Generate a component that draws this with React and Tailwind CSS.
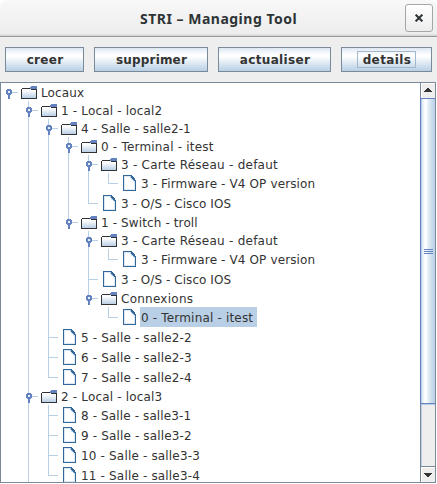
import React from "react";

const NODES = [
  [0, "Locaux", "folder", "tracking-[0.12px]"],
  [1, "1 - Local - local2", "folder", "tracking-[0.17px]"],
  [2, "4 - Salle - salle2-1", "folder", "tracking-[0.1px]"],
  [3, "0 - Terminal - itest", "folder", "tracking-[0.2px]"],
  [4, "3 - Carte Réseau - defaut", "folder", "tracking-[0.25px]"],
  [5, "3 - Firmware - V4 OP version", "leaf", "tracking-[0.13px]"],
  [4, "3 - O/S - Cisco IOS", "leaf", "tracking-[0.06px]"],
  [3, "1 - Switch - troll", "folder", "tracking-[0.12px]"],
  [4, "3 - Carte Réseau - defaut", "folder", "tracking-[0.25px]"],
  [5, "3 - Firmware - V4 OP version", "leaf", "tracking-[0.13px]"],
  [4, "3 - O/S - Cisco IOS", "leaf", "tracking-[0.06px]"],
  [4, "Connexions", "folder", "tracking-[0.25px]"],
  [5, "0 - Terminal - itest", "leaf", "tracking-[0.18px]", true],
  [2, "5 - Salle - salle2-2", "leaf", "tracking-[0.15px]"],
  [2, "6 - Salle - salle2-3", "leaf", "tracking-[0.15px]"],
  [2, "7 - Salle - salle2-4", "leaf", "tracking-[0.15px]"],
  [1, "2 - Local - local3", "folder", "tracking-[0.17px]"],
  [2, "8 - Salle - salle3-1", "leaf", "tracking-[0.12px]"],
  [2, "9 - Salle - salle3-2", "leaf", "tracking-[0.15px]"],
  [2, "10 - Salle - salle3-3", "leaf", "tracking-[0.17px]"],
  [2, "11 - Salle - salle3-4", "leaf", "tracking-[0.17px]"],
].map(([depth, label, kind, tracking, selected]) => ({ depth, label, kind, tracking, selected }));

// True when a later sibling exists at this level, so its guide line continues.
function continues(index, level) {
  for (let i = index + 1; i < NODES.length; i++) {
    if (NODES[i].depth < level) return level === 1;
    if (NODES[i].depth === level) return true;
  }
  return level === 1;
}

function Guides({ index }) {
  const { depth, kind } = NODES[index];
  const folder = kind === "folder";
  const h = folder ? 18 : 20;
  const mid = folder ? 9 : 10;
  const x = depth * 20 + 7;
  const lines = [];
  for (let level = 1; level <= depth; level++) {
    const on = continues(index, level);
    if (on || level === depth) {
      lines.push(
        <rect key={level} x={level * 20 + 7} y={0} width={1} height={on ? h : mid + 1} fill="#b8cfe5" />
      );
    }
  }
  const width = depth * 20 + (folder ? 20 : 22);
  return (
    <svg width={width} height={h} className="shrink-0" shapeRendering="crispEdges">
      {lines}
      <rect x={folder ? x + 4 : x} y={mid} width={folder ? 6 : 10} height={1} fill="#b8cfe5" />
      {folder && (
        <g fill="#6382bf">
          <rect x={x - 1} y={6} width={4} height={6} />
          <rect x={x - 2} y={7} width={6} height={4} />
          <rect x={x} y={12} width={2} height={4} />
          <rect x={x} y={8} width={2} height={2} fill="#e4ecf5" />
        </g>
      )}
    </svg>
  );
}

function FolderIcon() {
  return (
    <svg width="20" height="18" className="shrink-0" shapeRendering="crispEdges">
      <defs>
        <linearGradient id="folder" x1="0" y1="0" x2="0" y2="1">
          <stop offset="0" stopColor="#fff" />
          <stop offset="0.3" stopColor="#edf2f8" />
          <stop offset="1" stopColor="#b8cfe5" />
        </linearGradient>
      </defs>
      <rect x="0" y="6" width="16" height="10" fill="#333" />
      <rect x="1" y="5" width="9" height="1" fill="#333" />
      <rect x="1" y="6" width="9" height="2" fill="#fff" />
      <rect x="1" y="7" width="14" height="8" fill="url(#folder)" />
      <rect x="10" y="3" width="6" height="1" fill="#6382bf" />
      <rect x="9" y="4" width="7" height="2" fill="#6382bf" />
    </svg>
  );
}

function LeafIcon() {
  return (
    <svg width="18" height="20" className="shrink-0" shapeRendering="crispEdges">
      <g transform="translate(0 1)">
        <path d="M0 1h9v1h1v1h1v1h1v2h1v11H0z" fill="#336699" />
        <path d="M1 2h7v1h1v2h1v1h2v10H1z" fill="#dce8f3" />
        <path d="M2 3h6v3h2v2h1v7H2z" fill="#fff" />
        <path d="M7 2h1v1h1v1h1v1h1v2h-1v-1h-1v-1h-1v-1H7z" fill="#b8cfe5" />
        <path d="M8 3h1v1h1v1h1v1h1v1h-1v-1h-1v-1h-1v-1h-1z" fill="#336699" />
      </g>
    </svg>
  );
}

function Row({ index }) {
  const { label, kind, tracking, selected } = NODES[index];
  const folder = kind === "folder";
  return (
    <div className={`flex shrink-0 ${folder ? "h-[18px]" : "h-5"}`}>
      <Guides index={index} />
      {folder ? <FolderIcon /> : <LeafIcon />}
      <span
        className={`whitespace-pre -ml-px pl-px pt-0.5 ${tracking} ${folder ? "leading-[17px]" : "leading-[19px]"} ${
          selected ? "w-[117px] bg-[#b8cfe5]" : ""
        }`}
      >
        {label}
      </span>
    </div>
  );
}

const METAL =
  "border border-[#7a8a99] bg-[linear-gradient(180deg,#dde8f3_0%,#ffffff_30%,#ffffff_36%,#dfe9f3_65%,#b8cfe5_100%)]";

function MetalButton({ label, width, tracking, focused }) {
  return (
    <button className={`flex h-[25px] items-center justify-center ${METAL} ${width} ${tracking} text-[12px] font-bold`}>
      <span
        className={`flex h-[17px] items-center justify-center whitespace-nowrap border pl-px leading-[17px] ${
          focused ? "w-[59px] border-[#a3b8cc]" : "border-transparent"
        }`}
      >
        <span className="pt-0.5">{label}</span>
      </span>
    </button>
  );
}

function ArrowButton({ down }) {
  return (
    <div className="flex h-[15px] shrink-0 justify-center border-l border-t border-white bg-[#eeeeee]">
      <svg width="9" height="14" shapeRendering="crispEdges">
        <path
          d={down ? "M0 5h8v1h-1v1h-1v1h-1v1h-2v-1h-1v-1h-1v-1h-1z" : "M0 8h8v-1h-1v-1h-1v-1h-1v-1h-2v1h-1v1h-1v1h-1z"}
          fill="#333"
        />
      </svg>
    </div>
  );
}

function Scrollbar() {
  return (
    <div className="flex w-4 shrink-0 flex-col border-r border-[#7a8a99]">
      <div className="border-l border-[#7a8a99]">
        <ArrowButton />
      </div>
      <div className="flex h-[306px] shrink-0 flex-col items-center justify-center gap-px border-y border-l border-[#6382bf] bg-[linear-gradient(90deg,#b8cfe5_0_1px,#dde8f3_1px,#ffffff_4px,#ffffff_5px,#dfe9f3_8px,#b8cfe5_14px)]">
        <i className="h-px w-[9px] bg-[#6382bf]" />
        <i className="h-px w-[9px] bg-[#6382bf]" />
        <i className="h-px w-[9px] bg-[#6382bf]" />
      </div>
      <div className="flex-1 border-l border-[#7a8a99] bg-[#eeeeee]">
        <div className="h-full border-l border-t border-[#b8cfe5]" />
      </div>
      <div className="border-l border-t border-[#7a8a99]">
        <ArrowButton down />
      </div>
    </div>
  );
}

export default function App() {
  return (
    <div className="flex h-[484px] w-[437px] flex-col overflow-hidden bg-[#eeeeee] font-['DejaVu_Sans',sans-serif] text-[12px] text-[#333333]">
      <div className="bg-white">
        <header className="flex h-[37px] items-start rounded-t-[7px] border-b border-[#999999] bg-[linear-gradient(180deg,#f8f8f8,#ededed_34px,#d6d6d6_35px)] pt-1">
          <h1 className="w-[405px] whitespace-nowrap pl-[140px] pt-[5px] font-['Noto_Sans',sans-serif] text-[14px] font-bold leading-5 tracking-[0.5px] text-[#2e3436]">
            STRI – Managing Tool
          </h1>
          <button className="flex h-7 w-7 shrink-0 items-center justify-center rounded-[3px] border border-[#a6a6a6] bg-[linear-gradient(180deg,#ffffff,#ededed)]">
            <svg width="8" height="8" viewBox="0 0 8 8" stroke="#2e3436" strokeWidth="2">
              <path d="M.6.6l6.8 6.8M7.4.6L.6 7.4" />
            </svg>
          </button>
        </header>
      </div>
      <div className="flex h-[45px] shrink-0 gap-2.5 pl-[5px] pt-2.5">
        <MetalButton label="creer" width="w-[79px]" tracking="tracking-[0.3px]" />
        <MetalButton label="supprimer" width="w-[114px]" tracking="tracking-[0.17px]" />
        <MetalButton label="actualiser" width="w-[113px]" tracking="tracking-[0.33px]" />
        <MetalButton label="details" width="w-[91px]" tracking="tracking-[0.4px]" focused />
      </div>
      <div className="h-[402px] shrink-0 bg-white">
        <main className="flex h-[401px] w-[436px] border-y border-l border-[#7a8a99] bg-white">
          <div className="flex flex-1 flex-col overflow-hidden">
            {NODES.map((_, i) => (
              <Row key={i} index={i} />
            ))}
          </div>
          <Scrollbar />
        </main>
      </div>
    </div>
  );
}
